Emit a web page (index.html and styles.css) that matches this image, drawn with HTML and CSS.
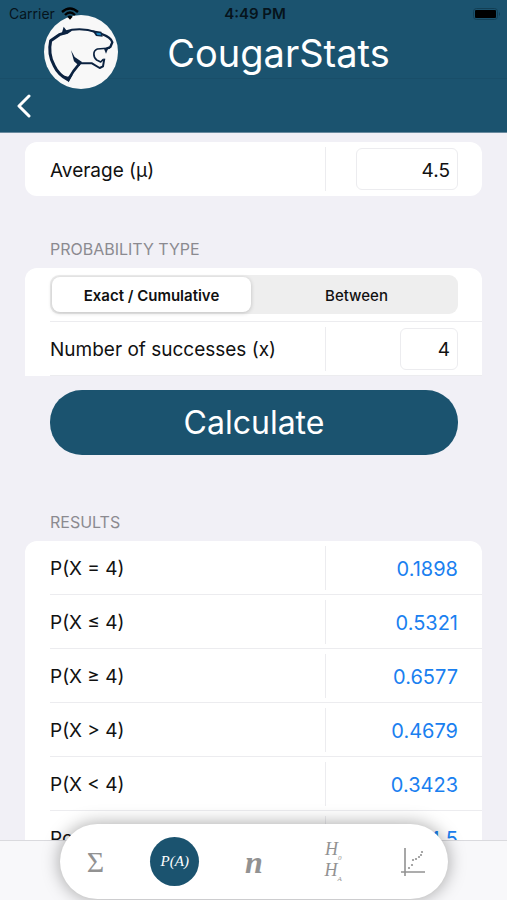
FILE: index.html
```html
<!DOCTYPE html>
<html lang="en">
    <head>
        <meta charset="UTF-8" />
        <meta name="viewport" content="width=device-width, initial-scale=1" />
        <title>CougarStats</title>
        <link rel="stylesheet" href="styles.css">
    </head>
    <body>
        <header class="header">
            <div class="status">
                <div class="carrier">
                    Carrier
                    <svg class="wifi" viewBox="0 0 18 13" aria-hidden="true">
                        <path d="M1 5 Q9 -2 17 5 M4 8 Q9 3 14 8" fill="none" stroke="#000" stroke-width="2.4" />
                        <path d="M6.3 9.8 Q9 7.4 11.7 9.8 L9 12.8 Z" />
                    </svg>
                </div>
                <div class="clock">4:49 PM</div>
                <div class="battery">
                    <svg viewBox="0 0 28 14" width="28" height="14" aria-hidden="true">
                        <rect x="0.5" y="1.5" width="24" height="11" rx="3" fill="none" stroke="#123f55" />
                        <rect x="2" y="3" width="21" height="8" rx="1" />
                        <path d="M26 5 Q28 7 26 9 Z" fill="#123f55" />
                    </svg>
                </div>
            </div>
            <div class="brand">
                <svg class="logo" viewBox="14 15 222 222" aria-hidden="true">
                    <circle cx="125" cy="126" r="111" fill="#f8f8f8" />
                    <g fill="none" stroke="#0b2240" stroke-linejoin="round">
                        <path d="M82 67 L60 74 L34 92 C28 120 34 148 44 166 C54 188 68 200 87 210" stroke-width="9" />
                        <path d="M76 65 C110 54 140 56 172 67" stroke-width="6" />
                        <path d="M184 71 C206 79 217 86 219 97 L213 111 L202 116" stroke-width="7" />
                        <path d="M212 114 L174 117 C160 122 161 141 172 150 L184 156 L192 148" stroke-width="5" />
                        <path d="M195 146 L191 169 L181 174 L158 160 L122 160" stroke-width="6" />
                        <path d="M121 160 L102 184 L86 210" stroke-width="8" />
                    </g>
                    <g fill="#0b2240">
                        <path d="M73 50 L82 62 L98 62 L84 72 L66 74 Z" />
                        <path d="M95 121 L106 141 L128 156 L120 168 L104 154 Z" />
                        <path d="M70 196 L88 217 L100 194 L86 200 Z" />
                        <path d="M158 61 L186 65 L190 80 L170 78 Z" />
                        <path d="M194 116 L206 116 L200 131 Z" />
                    </g>
                    <path d="M170 68 L183 69 L186 76 L174 75 Z" fill="#1e83bd" />
                </svg>
                <h1>CougarStats</h1>
            </div>
            <nav class="nav">
                <button type="button" class="back" aria-label="Back">
                    <svg viewBox="0 0 14 24" width="14" height="24" aria-hidden="true">
                        <path d="M12 2 L2 12 L12 22" fill="none" stroke="#fff" stroke-width="3" stroke-linecap="round" stroke-linejoin="round" />
                    </svg>
                </button>
            </nav>
        </header>

        <main class="content">
            <div class="card rounded">
                <div class="row">
                    <label for="average">Average (μ)</label>
                    <div class="field">
                        <input id="average" class="wide" type="text" inputmode="decimal" value="4.5" />
                    </div>
                </div>
            </div>

            <h2>PROBABILITY TYPE</h2>
            <div class="card">
                <div class="row">
                    <div class="segments">
                        <button type="button" class="selected" aria-pressed="true">Exact / Cumulative</button>
                        <button type="button" aria-pressed="false">Between</button>
                    </div>
                </div>
                <div class="row">
                    <label for="successes">Number of successes (x)</label>
                    <div class="field">
                        <input id="successes" type="text" inputmode="numeric" value="4" />
                    </div>
                </div>
            </div>
            <button type="button" class="calculate">Calculate</button>

            <h2>RESULTS</h2>
            <div class="card">
                <table class="results">
                    <tr>
                        <th scope="row">P(X = 4)</th>
                        <td>0.1898</td>
                    </tr>
                    <tr>
                        <th scope="row">P(X ≤ 4)</th>
                        <td>0.5321</td>
                    </tr>
                    <tr>
                        <th scope="row">P(X ≥ 4)</th>
                        <td>0.6577</td>
                    </tr>
                    <tr>
                        <th scope="row">P(X &gt; 4)</th>
                        <td>0.4679</td>
                    </tr>
                    <tr>
                        <th scope="row">P(X &lt; 4)</th>
                        <td>0.3423</td>
                    </tr>
                    <tr>
                        <th scope="row">Po</th>
                        <td>4.5</td>
                    </tr>
                </table>
            </div>
        </main>

        <footer class="footer">
            <nav class="tabs">
                <button type="button" class="sigma">Σ</button>
                <button type="button" class="active">P(A)</button>
                <button type="button" class="sample">n</button>
                <button type="button" class="hypothesis">
                    <span>H<sub>0</sub></span>
                    <span>H<sub>A</sub></span>
                </button>
                <button type="button" aria-label="Regression">
                    <svg viewBox="0 0 24 28" width="24" height="28" aria-hidden="true">
                        <path d="M4 0 V28 M0 24 H24" fill="none" stroke="#929292" stroke-width="1.6" />
                        <g fill="#929292">
                            <circle cx="8" cy="20" r="1.1" />
                            <circle cx="11" cy="17" r="1.1" />
                            <circle cx="12" cy="12" r="1.1" />
                            <circle cx="15" cy="11" r="1.1" />
                            <circle cx="18" cy="9" r="1.1" />
                            <circle cx="20" cy="7" r="1.1" />
                            <circle cx="21" cy="4" r="1.1" />
                        </g>
                    </svg>
                </button>
            </nav>
        </footer>
    </body>
</html>
```
FILE: styles.css
```css
* {
    box-sizing: border-box;
}

body {
    margin: 0;
    height: 100vh;
    display: flex;
    flex-direction: column;
    background: #f1f0f6;
    color: #111;
    font-family: Inter, "Liberation Sans", sans-serif;
    font-size: 19px;
}

button, input {
    font: inherit;
    color: inherit;
}

button {
    border: 0;
    padding: 0;
    background: none;
}

/* header */
.header {
    flex: none;
    background: #1b536f;
    border-bottom: 1px solid #6a8b9f;
}

.status {
    position: relative;
    z-index: 1;
    display: grid;
    grid-template-columns: 1fr auto 1fr;
    align-items: center;
    height: 27px;
    padding: 0 6px 0 9px;
    color: #06141c;
    font-size: 14px;
}

.carrier {
    display: flex;
    align-items: center;
    gap: 6px;
}

.wifi {
    width: 18px;
    height: 13px;
}

.clock {
    font-size: 15px;
    font-weight: 600;
}

.battery {
    display: flex;
    justify-content: flex-end;
}

.brand {
    position: relative;
    display: flex;
    align-items: center;
    justify-content: center;
    height: 52px;
    padding-left: 50px;
    border-bottom: 1px solid #194e69;
}

.logo {
    position: absolute;
    left: 44px;
    top: -12px;
    width: 74px;
    height: 74px;
}

h1 {
    margin: 0;
    color: #fff;
    font-size: 38px;
    font-weight: 400;
}

.nav {
    display: flex;
    align-items: center;
    height: 53px;
    padding-left: 17px;
}

.back {
    display: flex;
}

/* form */
.content {
    flex: 1;
    min-height: 0;
    overflow: hidden;
    padding: 9px 25px 0;
}

h2 {
    margin: 43px 25px 9px;
    color: #8b8a90;
    font-size: 16px;
    font-weight: 400;
    line-height: 20px;
}

.card {
    padding-left: 25px;
    background: #fff;
    border-radius: 12px 12px 0 0;
}

.card.rounded {
    border-radius: 12px;
}

.row {
    display: flex;
    align-items: center;
    height: 54px;
    padding-right: 24px;
    border-bottom: 1px solid #ececef;
}

.rounded .row {
    border-bottom: 0;
}

.row label {
    flex: 1;
    padding-top: 2px;
}

.field {
    flex: 0 0 133px;
    display: flex;
    justify-content: flex-end;
    padding: 1px 0;
    border-left: 1px solid #ececef;
}

.field input {
    width: 58px;
    height: 42px;
    padding: 2px 7px 0;
    border: 1px solid #ececef;
    border-radius: 6px;
    background: #fff;
    text-align: right;
}

.field input.wide {
    width: 102px;
}

.segments {
    flex: 1;
    display: flex;
    gap: 6px;
    height: 39px;
    padding: 2px;
    border-radius: 9px;
    background: #eee;
    font-size: 15px;
    font-weight: 500;
}

.segments button {
    flex: 1;
    padding-top: 2px;
    border-radius: 8px;
}

.segments .selected {
    background: #fff;
    box-shadow: 0 1px 4px rgba(0, 0, 0, 0.2);
    font-weight: 600;
}

.calculate {
    display: block;
    width: calc(100% - 49px);
    height: 65px;
    margin: 14px 24px 0 25px;
    border-radius: 32px;
    background: #1b536f;
    color: #fff;
    font-size: 32px;
}

.calculate + h2 {
    margin-top: 57px;
}

/* results */
.results {
    width: 100%;
    border-collapse: separate;
    border-spacing: 0;
    table-layout: fixed;
}

.results th, .results td {
    height: 54px;
    padding: 2px 0 0;
    border-bottom: 1px solid #ececef;
}

.results th {
    text-align: left;
    font-weight: 400;
}

.results td {
    width: 157px;
    padding-right: 24px;
    /* divider stops short of the row lines */
    background: linear-gradient(#ececef, #ececef) left center / 1px 44px no-repeat;
    color: #1a80f0;
    font-size: 20px;
    text-align: right;
}

/* bottom tabs */
.footer {
    position: relative;
    flex: none;
    height: 60px;
    border-top: 1px solid #dadade;
    background: #f8f8fa;
}

.tabs {
    position: absolute;
    left: 60px;
    right: 59px;
    bottom: 1px;
    display: flex;
    align-items: center;
    justify-content: space-between;
    height: 75px;
    padding: 0 11px;
    border-radius: 38px;
    background: #fff;
    box-shadow: 0 0 18px rgba(0, 0, 0, 0.36);
}

.tabs button {
    display: flex;
    flex-direction: column;
    align-items: center;
    justify-content: center;
    width: 49px;
    height: 49px;
    border-radius: 50%;
    color: #929292;
    font-family: "Liberation Serif", serif;
    line-height: 1;
}

.tabs .sigma {
    font-size: 30px;
}

.tabs .active {
    background: #1b536f;
    color: #fff;
    font-size: 15px;
    font-style: italic;
}

.tabs .sample {
    font-size: 32px;
    font-style: italic;
    font-weight: 700;
}

.tabs .hypothesis {
    font-size: 18px;
    font-style: italic;
    line-height: 17px;
}

.hypothesis sub {
    font-size: 7px;
    line-height: 1;
}
```
